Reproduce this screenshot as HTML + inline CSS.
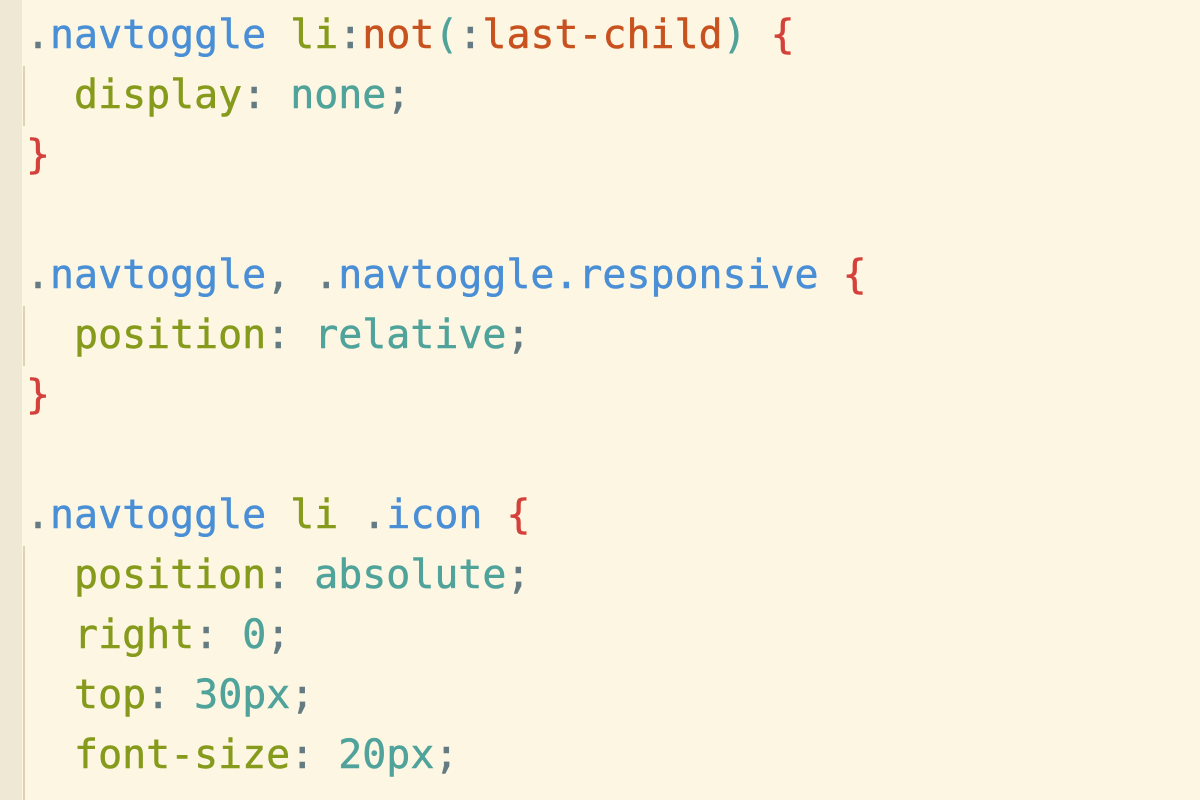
<!DOCTYPE html>
<html><head><style>
html,body{margin:0;padding:0;width:1200px;height:800px;overflow:hidden;background:#fdf6e3;}
.g{position:absolute;left:0;top:0;width:22px;height:800px;background:#eee8d5;}
.code{position:absolute;left:26px;top:5px;font-family:"DejaVu Sans Mono","Liberation Mono",monospace;font-size:39.9px;line-height:60px;white-space:pre;color:#657b83;-webkit-text-stroke:0.5px currentColor;}
.b{color:#4a8fd6}.gr{color:#869a1c}.c{color:#4fa39a}.o{color:#c8521f}.r{color:#d4403a}.p{color:#657b83}
.ig{position:absolute;left:23px;width:2px;background:#ddd3b0;}
</style></head><body>
<div class="g"></div>
<div class="ig" style="top:66px;height:60px"></div>
<div class="ig" style="top:306px;height:60px"></div>
<div class="ig" style="top:546px;height:254px"></div>
<div class="code"><span class="p">.</span><span class="b">navtoggle</span> <span class="gr">li</span><span class="p">:</span><span class="o">not</span><span class="c">(</span><span class="p">:</span><span class="o">last-child</span><span class="c">)</span> <span class="r">{</span>
  <span class="gr">display</span><span class="p">:</span> <span class="c">none</span><span class="p">;</span>
<span class="r">}</span>

<span class="p">.</span><span class="b">navtoggle</span><span class="p">, .</span><span class="b">navtoggle.responsive</span> <span class="r">{</span>
  <span class="gr">position</span><span class="p">:</span> <span class="c">relative</span><span class="p">;</span>
<span class="r">}</span>

<span class="p">.</span><span class="b">navtoggle</span> <span class="gr">li</span> <span class="p">.</span><span class="b">icon</span> <span class="r">{</span>
  <span class="gr">position</span><span class="p">:</span> <span class="c">absolute</span><span class="p">;</span>
  <span class="gr">right</span><span class="p">:</span> <span class="c">0</span><span class="p">;</span>
  <span class="gr">top</span><span class="p">:</span> <span class="c">30px</span><span class="p">;</span>
  <span class="gr">font-size</span><span class="p">:</span> <span class="c">20px</span><span class="p">;</span>
</div>
</body></html>
